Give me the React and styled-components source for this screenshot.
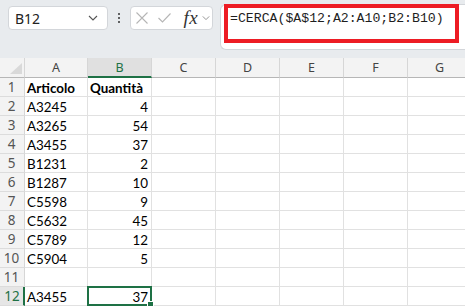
import React from "react";
import styled, { createGlobalStyle } from "styled-components";

const Global = createGlobalStyle`
  html, body { margin: 0; padding: 0; background: #ffffff; overflow: hidden; }
  * { box-sizing: border-box; }
`;

const Page = styled.div`
  width: 465px;
  height: 307px;
  overflow: hidden;
  font-family: "Noto Sans", "Open Sans", sans-serif;
`;

const Toolbar = styled.div`
  display: flex;
  align-items: flex-start;
  height: 58px;
  padding: 6px 0 0 8px;
  background: #e8ebee;
`;

const NameBox = styled.div`
  width: 100px;
  height: 24px;
  display: flex;
  align-items: center;
  justify-content: space-between;
  padding: 0 9px 0 6px;
  background: #fff;
  border: 1px solid #d3d6da;
  border-radius: 4px;
  font-size: 14px;
  color: #222;
`;

const Dots = styled.div`
  width: 22px;
  height: 24px;
  display: flex;
  flex-direction: column;
  align-items: center;
  justify-content: center;
  gap: 2px;
`;

const Dot = styled.span`
  width: 2px;
  height: 2px;
  background: #333;
  border-radius: 1px;
`;

const FxGroup = styled.div`
  width: 83px;
  height: 24px;
  display: flex;
  align-items: center;
  padding-left: 5px;
  background: #fff;
  border: 1px solid #d3d6da;
  border-radius: 4px;
`;

const IconSlot = styled.span`
  display: flex;
  align-items: center;
  justify-content: flex-start;
  width: ${(p) => p.$w}px;
  height: 22px;
`;

const Fx = styled.span`
  font-family: "Liberation Serif", "DejaVu Serif", serif;
  font-style: italic;
  font-size: 19px;
  color: #333;
  width: 21px;
  padding-left: 2px;
  line-height: 22px;
  letter-spacing: 0.5px;
`;

const FormulaBar = styled.div`
  flex: 1;
  height: 46px;
  margin: -2px 0 0 7px;
  padding-left: 3px;
  background: #fff;
  border: 1px solid #d3d6da;
  border-right: none;
  border-radius: 6px 0 0 6px;
`;

const Highlight = styled.div`
  width: 235px;
  height: 39px;
  margin-top: -1px;
  border: 4px solid #ed1c24;
  padding: 1px 0 0 2px;
  font-family: "Liberation Mono", "DejaVu Sans Mono", monospace;
  font-size: 13.2px;
  line-height: 20px;
  color: #1e1e1e;
  white-space: nowrap;
`;

const Sheet = styled.div`
  display: grid;
  grid-template-columns: 25px 63px repeat(6, 64px);
  grid-template-rows: 20px;
  grid-auto-rows: 19px;
  width: 465px;
  overflow: hidden;
`;

const Corner = styled.div`
  background: #f3f3f3;
  border-right: 1px solid #d6d6d6;
  border-bottom: 1px solid #b6b6b6;
  display: flex;
  align-items: flex-end;
  justify-content: flex-end;
  padding: 0 2px 3px 0;
`;

const ColHeader = styled.div`
  display: flex;
  align-items: center;
  justify-content: center;
  background: ${(p) => (p.$active ? "#e0e0e0" : "#f3f3f3")};
  border-right: 1px solid #d6d6d6;
  border-bottom: ${(p) => (p.$active ? "2px solid #1e7145" : "1px solid #b6b6b6")};
  color: ${(p) => (p.$active ? "#1e7145" : "#444")};
  font-size: 12.5px;
  padding-top: ${(p) => (p.$active ? "1px" : "0")};
`;

const RowHeader = styled.div`
  display: flex;
  align-items: center;
  justify-content: center;
  background: ${(p) => (p.$active ? "#e6e6e6" : "#f3f3f3")};
  border-right: ${(p) => (p.$active ? "2px solid #1e7145" : "1px solid #d6d6d6")};
  border-bottom: 1px solid #dcdcdc;
  color: ${(p) => (p.$active ? "#1e7145" : "#555")};
  font-size: 13.5px;
  padding-right: ${(p) => (p.$active ? "0" : "1px")};
  padding-left: ${(p) => (p.$active ? "1px" : "0")};
`;

const Cell = styled.div`
  position: relative;
  display: flex;
  align-items: center;
  justify-content: ${(p) => (p.$num ? "flex-end" : "flex-start")};
  padding: 1px 3px 0 2px;
  border-right: 1px solid #e1e1e1;
  border-bottom: 1px solid #e1e1e1;
  font-family: "Lato", "Open Sans", sans-serif;
  font-size: 13.4px;
  font-weight: ${(p) => (p.$bold ? 700 : 400)};
  color: #000;
  white-space: nowrap;

  ${(p) =>
    p.$selected &&
    `
    &::after {
      content: "";
      position: absolute;
      left: -1px;
      top: -1px;
      right: -1px;
      bottom: -1px;
      border: 2px solid #1e7145;
      pointer-events: none;
    }
    &::before {
      content: "";
      position: absolute;
      right: -3px;
      bottom: -3px;
      width: 5px;
      height: 5px;
      background: #1e7145;
      border: 1px solid #fff;
      z-index: 1;
    }
  `}
`;

const columns = ["A", "B", "C", "D", "E", "F", "G"];

const rows = [
  ["Articolo", "Quantità", true],
  ["A3245", "4"],
  ["A3265", "54"],
  ["A3455", "37"],
  ["B1231", "2"],
  ["B1287", "10"],
  ["C5598", "9"],
  ["C5632", "45"],
  ["C5789", "12"],
  ["C5904", "5"],
  ["", ""],
  ["A3455", "37"],
];

const Chevron = ({ w = 10, color = "#555" }) => (
  <svg width={w} height="6" viewBox="0 0 10 6">
    <path d="M1 1 L5 5 L9 1" fill="none" stroke={color} strokeWidth="1.1" />
  </svg>
);

export default function App() {
  return (
    <Page>
      <Global />
      <Toolbar>
        <NameBox>
          <span>B12</span>
          <Chevron />
        </NameBox>
        <Dots>
          <Dot />
          <Dot />
          <Dot />
        </Dots>
        <FxGroup>
          <IconSlot $w={22}>
            <svg width="12" height="12" viewBox="0 0 12 12">
              <path d="M0.5 0.5 L11.5 11.5 M11.5 0.5 L0.5 11.5" stroke="#b5b5b5" strokeWidth="1.1" fill="none" />
            </svg>
          </IconSlot>
          <IconSlot $w={24}>
            <svg width="13" height="10" viewBox="0 0 13 10">
              <path d="M0.5 5 L4.5 9 L12.5 0.5" stroke="#b5b5b5" strokeWidth="1.1" fill="none" />
            </svg>
          </IconSlot>
          <Fx>fx</Fx>
          <IconSlot $w={10}>
            <Chevron w={8} color="#888" />
          </IconSlot>
        </FxGroup>
        <FormulaBar>
          <Highlight>=CERCA($A$12;A2:A10;B2:B10)</Highlight>
        </FormulaBar>
      </Toolbar>
      <Sheet>
        <Corner>
          <svg width="12" height="11" viewBox="0 0 12 11">
            <polygon points="12,0 12,11 0,11" fill="#d9d9d9" />
          </svg>
        </Corner>
        {columns.map((c) => (
          <ColHeader key={c} $active={c === "B"}>
            {c}
          </ColHeader>
        ))}
        {rows.map(([a, b, bold], i) => {
          const n = i + 1;
          return (
            <React.Fragment key={n}>
              <RowHeader $active={n === 12}>{n}</RowHeader>
              <Cell $bold={bold}>{a}</Cell>
              <Cell $bold={bold} $num={!bold} $selected={n === 12}>
                {b}
              </Cell>
              {columns.slice(2).map((c) => (
                <Cell key={c} />
              ))}
            </React.Fragment>
          );
        })}
      </Sheet>
    </Page>
  );
}
